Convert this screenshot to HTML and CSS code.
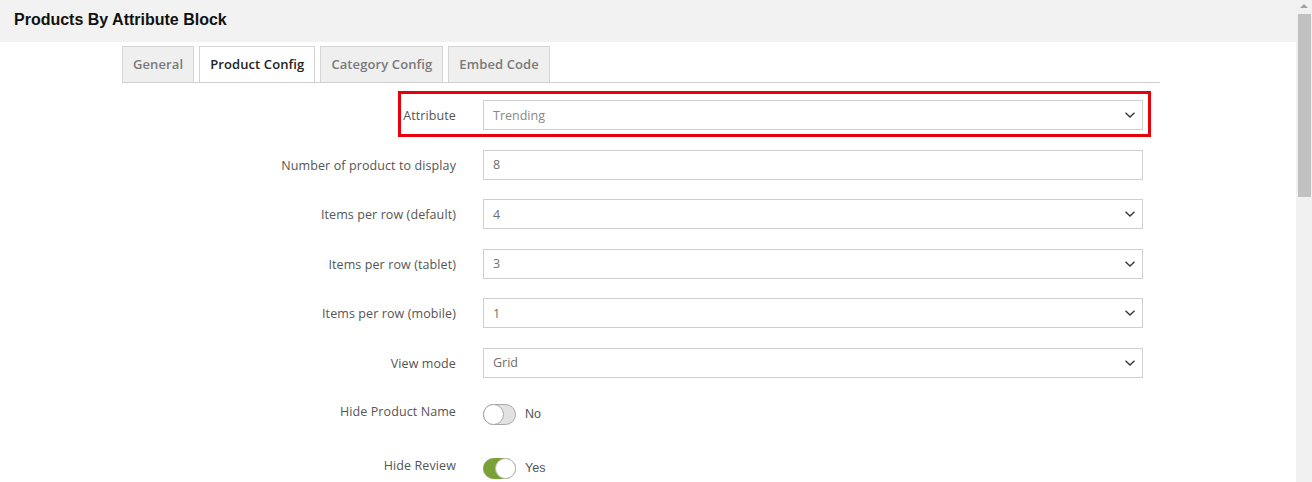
FILE: index.html
```html
<!DOCTYPE html>
<html>
<head>
<meta charset="utf-8">
<link rel="stylesheet" href="styles.css">
</head>
<body>
<div class="page">
  <header class="page-header">
    <h1 class="page-title">Products By Attribute Block</h1>
  </header>
  <main class="content">
    <nav class="tabs">
      <div class="tab">General</div>
      <div class="tab tab-active">Product Config</div>
      <div class="tab">Category Config</div>
      <div class="tab">Embed Code</div>
    </nav>
    <form class="form">
      <div class="row row-highlight">
        <label class="label">Attribute</label>
        <div class="select"><span class="value light">Trending</span><svg class="chev" width="12" height="8" viewBox="0 0 12 8"><path d="M1.5 1.8 L6 6 L10.5 1.8" fill="none" stroke="#333" stroke-width="1.3"/></svg></div>
        <div class="highlight"></div>
      </div>
      <div class="row">
        <label class="label">Number of product to display</label>
        <div class="input"><span class="value">8</span></div>
      </div>
      <div class="row">
        <label class="label">Items per row (default)</label>
        <div class="select"><span class="value">4</span><svg class="chev" width="12" height="8" viewBox="0 0 12 8"><path d="M1.5 1.8 L6 6 L10.5 1.8" fill="none" stroke="#333" stroke-width="1.3"/></svg></div>
      </div>
      <div class="row">
        <label class="label">Items per row (tablet)</label>
        <div class="select"><span class="value">3</span><svg class="chev" width="12" height="8" viewBox="0 0 12 8"><path d="M1.5 1.8 L6 6 L10.5 1.8" fill="none" stroke="#333" stroke-width="1.3"/></svg></div>
      </div>
      <div class="row">
        <label class="label">Items per row (mobile)</label>
        <div class="select"><span class="value">1</span><svg class="chev" width="12" height="8" viewBox="0 0 12 8"><path d="M1.5 1.8 L6 6 L10.5 1.8" fill="none" stroke="#333" stroke-width="1.3"/></svg></div>
      </div>
      <div class="row row-last-select">
        <label class="label">View mode</label>
        <div class="select"><span class="value">Grid</span><svg class="chev" width="12" height="8" viewBox="0 0 12 8"><path d="M1.5 1.8 L6 6 L10.5 1.8" fill="none" stroke="#333" stroke-width="1.3"/></svg></div>
      </div>
      <div class="row row-toggle">
        <label class="label">Hide Product Name</label>
        <div class="toggle-wrap"><span class="toggle"><span class="knob"></span></span><span class="toggle-text">No</span></div>
      </div>
      <div class="row row-toggle">
        <label class="label">Hide Review</label>
        <div class="toggle-wrap"><span class="toggle toggle-on"><span class="knob"></span></span><span class="toggle-text">Yes</span></div>
      </div>
    </form>
  </main>
</div>
<div class="scrollbar">
  <div class="scroll-arrow"></div>
  <div class="scroll-thumb"></div>
</div>
</body>
</html>
```

FILE: styles.css
```css
html, body {
  margin: 0;
  padding: 0;
}
body {
  width: 1312px;
  height: 482px;
  overflow: hidden;
  display: flex;
  background: #fff;
  font-family: "Open Sans", "Liberation Sans", sans-serif;
}
.page {
  flex: 1;
  min-width: 0;
}
.page-header {
  background: #f2f2f2;
  height: 42px;
  box-sizing: border-box;
  padding: 11px 14px 0;
}
.page-title {
  margin: 0;
  font-family: "Liberation Sans", Arial, sans-serif;
  font-weight: 700;
  font-size: 16px;
  line-height: 18px;
  color: #111;
}
.content {
  margin-left: 122px;
  width: 1038px;
  padding-top: 4px;
}
.tabs {
  display: flex;
  gap: 5px;
  border-bottom: 1px solid #cfcfcf;
}
.tab {
  height: 36px;
  box-sizing: border-box;
  padding: 0 10px;
  border: 1px solid #d4d4d4;
  border-bottom: none;
  background: #efefef;
  color: #7a7a7a;
  font-size: 13px;
  font-weight: 600;
  line-height: 35px;
  letter-spacing: 0.1px;
}
.tab-active {
  background: #fff;
  color: #222;
}
.form {
  padding-top: 17px;
}
.row {
  display: grid;
  grid-template-columns: 334px 660px;
  column-gap: 27px;
  align-items: start;
  margin-bottom: 19.6px;
  position: relative;
}
.row-last-select {
  margin-bottom: 18px;
}
.row-toggle {
  margin-bottom: 25px;
}
.label {
  text-align: right;
  font-size: 12.5px;
  color: #555;
  padding-top: 7px;
  line-height: 17px;
  letter-spacing: 0.1px;
}
.select, .input {
  height: 30px;
  box-sizing: border-box;
  border: 1px solid #cfcfcf;
  display: flex;
  align-items: center;
  justify-content: space-between;
  padding: 0 6px 0 9px;
  background: #fff;
}
.value {
  font-size: 12.5px;
  color: #6e6e6e;
}
.value.light {
  color: #888;
}
.chev {
  display: block;
}
.highlight {
  position: absolute;
  left: 276px;
  top: -9px;
  width: 753px;
  height: 46px;
  box-sizing: border-box;
  border: 3px solid #e8000b;
  pointer-events: none;
}
.toggle-wrap {
  display: flex;
  align-items: center;
  gap: 9px;
  padding-top: 8px;
}
.toggle {
  width: 33px;
  height: 21px;
  box-sizing: border-box;
  border-radius: 11px;
  background: #e2e2e2;
  border: 1px solid #a8a8a8;
  position: relative;
  display: block;
}
.knob {
  position: absolute;
  left: -1px;
  top: -1px;
  width: 21px;
  height: 21px;
  box-sizing: border-box;
  border-radius: 50%;
  background: #fff;
  border: 1px solid #a8a8a8;
}
.toggle-on {
  background: #79a136;
  border-color: #79a136;
}
.toggle-on .knob {
  left: auto;
  right: -1px;
  border-color: #bbb;
}
.toggle-text {
  font-family: "Liberation Sans", Arial, sans-serif;
  font-size: 12.5px;
  color: #555;
}
.scrollbar {
  width: 16px;
  height: 482px;
  background: #f1f1f1;
  display: flex;
  flex-direction: column;
  align-items: flex-end;
  flex-shrink: 0;
}
.scroll-arrow {
  width: 0;
  height: 0;
  margin: 4px 4px 0 0;
  border-left: 4px solid transparent;
  border-right: 4px solid transparent;
  border-bottom: 4px solid #a3a3a3;
}
.scroll-thumb {
  width: 13px;
  height: 183px;
  margin-top: 6px;
  margin-right: 1px;
  background: #c1c1c1;
}
```
